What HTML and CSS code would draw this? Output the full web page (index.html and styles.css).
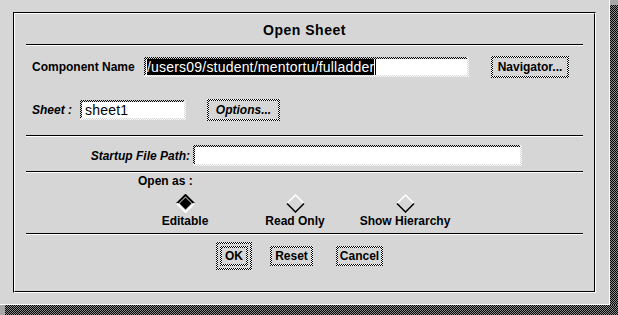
FILE: index.html
```html
<!DOCTYPE html>
<html lang="en">
<head>
    <meta charset="UTF-8">
    <title>Open Sheet</title>
    <link rel="stylesheet" href="styles.css">
</head>
<body>
<div class="screen">
    <div class="dialog">
        <div class="frame">
            <div class="panel">
                <div class="title">Open Sheet</div>
                <div class="sep"></div>

                <!-- component name -->
                <div class="row row-name">
                    <span class="label name-label">Component Name</span>
                    <div class="field name-field">
                        <div class="field-in">
                            <div class="field-text"><span class="selected">/users09/student/mentortu/fulladder</span><span class="cursor"></span></div>
                        </div>
                    </div>
                    <div class="btn nav-btn"><span>Navigator...</span></div>
                </div>

                <!-- sheet -->
                <div class="row row-sheet">
                    <span class="label italic sheet-label">Sheet :</span>
                    <div class="field sheet-field">
                        <div class="field-in">
                            <div class="field-text">sheet1</div>
                        </div>
                    </div>
                    <div class="btn opt-btn"><span class="italic">Options...</span></div>
                </div>
                <div class="sep sep-mid"></div>

                <!-- startup path -->
                <div class="row row-path">
                    <span class="label italic path-label">Startup File Path:</span>
                    <div class="field path-field">
                        <div class="field-in">
                            <div class="field-text"></div>
                        </div>
                    </div>
                </div>
                <div class="sep sep-path"></div>

                <!-- open mode -->
                <div class="open-as">Open as :</div>
                <div class="choices">
                    <div class="choice">
                        <svg class="diamond" width="19" height="19" viewBox="0 0 19 19">
                            <polyline points="1,9.5 9.5,1 18,9.5" fill="none" stroke="#000" stroke-width="2"/>
                            <polyline points="1,9.5 9.5,18 18,9.5" fill="none" stroke="#fff" stroke-width="2"/>
                            <polygon points="9.5,3.5 15.5,9.5 9.5,15.5 3.5,9.5" fill="#000"/>
                        </svg>
                        <span>Editable</span>
                    </div>
                    <div class="choice">
                        <svg class="diamond" width="19" height="19" viewBox="0 0 19 19">
                            <polyline points="1,9.5 9.5,1 18,9.5" fill="none" stroke="#fff" stroke-width="1.5"/>
                            <polyline points="1,9.5 9.5,18 18,9.5" fill="none" stroke="#000" stroke-width="1.5"/>
                        </svg>
                        <span>Read Only</span>
                    </div>
                    <div class="choice">
                        <svg class="diamond" width="19" height="19" viewBox="0 0 19 19">
                            <polyline points="1,9.5 9.5,1 18,9.5" fill="none" stroke="#fff" stroke-width="1.5"/>
                            <polyline points="1,9.5 9.5,18 18,9.5" fill="none" stroke="#000" stroke-width="1.5"/>
                        </svg>
                        <span>Show Hierarchy</span>
                    </div>
                </div>
                <div class="sep sep-bottom"></div>

                <!-- actions -->
                <div class="actions">
                    <div class="default-ring">
                        <div class="btn ok-btn"><span>OK</span></div>
                    </div>
                    <div class="btn reset-btn"><span>Reset</span></div>
                    <div class="btn cancel-btn"><span>Cancel</span></div>
                </div>
            </div>
        </div>
    </div>
    <div class="shadow-right"></div>
    <div class="shadow-bottom"></div>
</div>
</body>
</html>
```

FILE: styles.css
```css
body {
    margin: 0;
    background: #a8a8a8;
    font-family: "Liberation Sans", Arial, sans-serif;
    color: #000;
}

.screen {
    display: grid;
    grid-template-columns: 610px 8px;
    grid-template-rows: 305px 10px;
    width: 618px;
    height: 315px;
    overflow: hidden;
}

.dialog {
    background: #d6d6d6;
    border-right: 1px solid #fff;
    border-bottom: 1px solid #fff;
    padding: 12px 0 0 13px;
}

.shadow-right {
    margin-top: 5px;
    background: repeating-conic-gradient(#000 0 25%, #8c8c8c 0 50%) 0 0 / 2px 2px;
}
.shadow-bottom {
    grid-column: 1 / 3;
    margin-left: 5px;
    background: repeating-conic-gradient(#000 0 25%, #8c8c8c 0 50%) 0 0 / 2px 2px;
}

/* etched frame */
.frame {
    width: 581px;
    height: 279px;
    border: 1px solid;
    border-color: #000 #fff #fff #000;
}
.panel {
    height: 277px;
    border: 1px solid;
    border-color: #fff #000 #000 #fff;
    padding: 0 11px;
    display: flex;
    flex-direction: column;
}

.title {
    height: 30px;
    display: flex;
    align-items: center;
    justify-content: center;
    font-size: 14px;
    font-weight: bold;
    letter-spacing: 0.5px;
    padding-top: 2px;
    box-sizing: border-box;
}

.sep {
    border-top: 1px solid #000;
    border-bottom: 1px solid #fff;
}

.row {
    display: flex;
    align-items: center;
    height: 22px;
}
.label {
    font-size: 12px;
    font-weight: bold;
}
.italic {
    font-style: italic;
}

.row-name {
    margin-top: 10px;
    padding-left: 6px;
}
.name-label {
    width: 112px;
}
.row-sheet {
    margin-top: 21px;
    padding-left: 6px;
}
.sheet-label {
    width: 48px;
}
.sep-mid {
    margin-top: 14px;
}
.row-path {
    margin-top: 8px;
    height: 21px;
}
.path-label {
    width: 164px;
    text-align: right;
    margin-right: 3px;
}
.sep-path {
    margin-top: 5px;
}

/* sunken text fields */
.field {
    box-sizing: border-box;
    height: 20px;
    padding: 0 2px 2px 0;
    background: repeating-conic-gradient(#fff 0 25%, #d6d6d6 0 50%) 0 0 / 2px 2px;
}
.field-in {
    height: 100%;
    box-sizing: border-box;
    padding: 2px 0 0 2px;
    background: repeating-conic-gradient(#000 0 25%, #d6d6d6 0 50%) 0 0 / 2px 2px;
}
.field-text {
    height: 100%;
    background: #fff;
    font-size: 14px;
    letter-spacing: 0.2px;
    line-height: 16px;
    padding-left: 1px;
    display: flex;
    align-items: center;
    white-space: nowrap;
}
.name-field {
    width: 325px;
}
.selected {
    background: #000;
    color: #fff;
    line-height: 16px;
}
.cursor {
    width: 1px;
    height: 16px;
    background: #000;
    margin-left: 1px;
}
.sheet-field {
    width: 106px;
}
.sheet-field .field-text {
    padding-left: 3px;
}
.path-field {
    width: 329px;
    height: 21px;
}

/* push buttons */
.btn {
    box-sizing: border-box;
    height: 22px;
    padding: 2px;
    background: repeating-conic-gradient(#000 0 25%, #fff 0 50%) 0 0 / 2px 2px;
    font-size: 12px;
    font-weight: bold;
}
.btn span {
    display: flex;
    align-items: center;
    justify-content: center;
    height: 100%;
    background: #d6d6d6;
}
.nav-btn {
    width: 78px;
    margin-left: 22px;
}
.opt-btn {
    width: 73px;
    margin-left: 21px;
}

.open-as {
    margin-top: 1px;
    padding-left: 112px;
    font-size: 12px;
    font-weight: bold;
    line-height: 15px;
}
.choices {
    display: flex;
    margin-left: 104px;
    margin-top: 5px;
}
.choice {
    width: 110px;
    display: flex;
    flex-direction: column;
    align-items: center;
    font-size: 12px;
    font-weight: bold;
}
.choice span {
    line-height: 16px;
}
.sep-bottom {
    margin-top: 4px;
}

.actions {
    display: flex;
    align-items: center;
    margin-top: 7px;
    padding-left: 190px;
}
.default-ring {
    padding: 2px;
    background: repeating-conic-gradient(#000 0 25%, #fff 0 50%) 0 0 / 2px 2px;
}
.default-ring .btn {
    border: 2px solid #d6d6d6;
}
.btn.ok-btn {
    width: 32px;
    padding: 2px;
}
.actions .btn {
    height: 20px;
}
.actions .default-ring .btn {
    height: 24px;
}
.reset-btn {
    width: 43px;
    margin-left: 18px;
}
.cancel-btn {
    width: 47px;
    margin-left: 23px;
}
```
